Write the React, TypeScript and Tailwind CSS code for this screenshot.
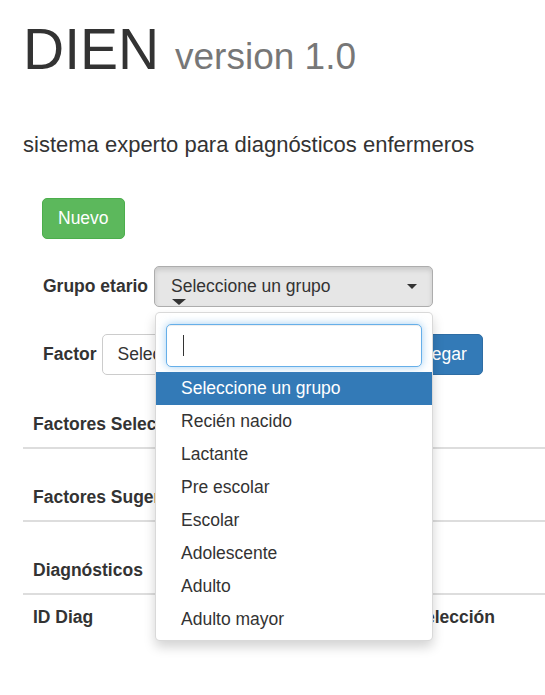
const grupos = [
  'Seleccione un grupo',
  'Recién nacido',
  'Lactante',
  'Pre escolar',
  'Escolar',
  'Adolescente',
  'Adulto',
  'Adulto mayor',
];

function HeaderTable({ title }: { title: string }) {
  return (
    <div className="border-b-2 border-[#ddd] px-[10px] py-[10px] font-bold whitespace-nowrap">
      {title}
    </div>
  );
}

export default function App() {
  return (
    <div className="min-h-screen overflow-hidden bg-white pl-[23px] font-['Liberation_Sans',Arial,sans-serif] text-[17.5px] leading-[25px] text-[#333]">
      <h1 className="pt-[18px] text-[57px] leading-[62px] font-normal whitespace-nowrap">
        DIEN <small className="text-[37px] text-[#777]">version 1.0</small>
      </h1>

      <p className="mt-[42px] text-[22px] leading-[30px]">
        sistema experto para diagnósticos enfermeros
      </p>

      <button className="mt-[38px] ml-[19px] h-[41px] rounded-[5px] border border-[#4cae4c] bg-[#5cb85c] px-[15px] text-white">
        Nuevo
      </button>

      {/* Grupo etario with its open dropdown */}
      <div className="mt-[27px] flex items-center pl-[20px]">
        <label className="font-bold">Grupo etario</label>
        <div className="relative ml-[6px] w-[279px]">
          <div className="flex h-[41px] items-center rounded-[5px] border border-[#adadad] bg-[#e6e6e6] pl-[16px] shadow-[inset_0_3px_5px_rgba(0,0,0,0.125)]">
            <span>Seleccione un grupo</span>
            <span className="mr-[15px] ml-auto h-0 w-0 border-x-[5px] border-t-[5px] border-x-transparent border-t-[#333]" />
          </div>
          <span className="absolute top-[33px] left-[18px] h-0 w-0 border-x-[7px] border-t-[6px] border-x-transparent border-t-[#333]" />

          <div className="absolute top-[46px] left-[1px] z-10 w-[278px] rounded-[5px] border border-black/15 bg-white pt-[6px] pb-[4px] shadow-[0_6px_12px_rgba(0,0,0,0.175)]">
            <div className="px-[10px] py-[5px]">
              <div className="relative h-[43px] rounded-[5px] border border-[#66afe9] bg-white shadow-[inset_0_1px_1px_rgba(0,0,0,0.075),0_0_8px_rgba(102,175,233,0.6)]">
                <span className="absolute top-[10px] left-[16px] h-[21px] w-px bg-[#333]" />
              </div>
            </div>
            <ul>
              {grupos.map((g, i) => (
                <li
                  key={g}
                  className={
                    i === 0
                      ? 'flex h-[33px] items-center bg-[#337ab7] pl-[25px] text-white'
                      : 'flex h-[33px] items-center pl-[25px] text-[#333]'
                  }
                >
                  {g}
                </li>
              ))}
            </ul>
          </div>
        </div>
      </div>

      {/* Factor picker */}
      <div className="mt-[27px] flex items-center pl-[20px]">
        <label className="font-bold">Factor</label>
        <div className="ml-[6px] flex h-[41px] w-[282px] items-center rounded-[5px] border border-[#ccc] bg-white pl-[14px]">
          Seleccione un factor
        </div>
        <button className="ml-[4px] h-[41px] rounded-[5px] border border-[#2e6da4] bg-[#337ab7] px-[15px] text-white">
          Agregar
        </button>
      </div>

      <div className="mt-[27px]">
        <HeaderTable title="Factores Seleccionados" />
      </div>
      <div className="mt-[26px]">
        <HeaderTable title="Factores Sugeridos" />
      </div>
      <div className="mt-[26px]">
        <HeaderTable title="Diagnósticos" />
        <div className="flex px-[10px] py-[10px] font-bold">
          <span>ID Diag</span>
          <span className="mr-[40px] ml-auto">Selección</span>
        </div>
      </div>
    </div>
  );
}
